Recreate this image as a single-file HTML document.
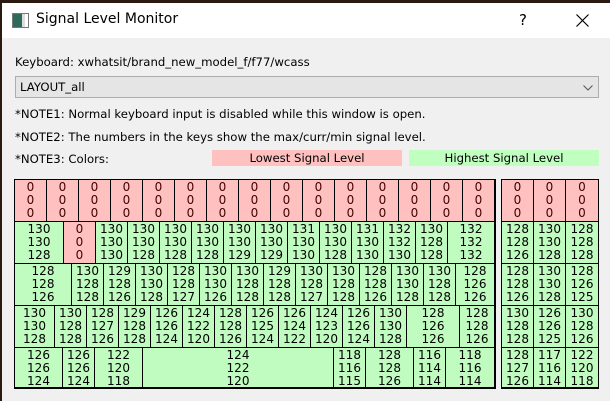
<!DOCTYPE html>
<html><head><meta charset="utf-8"><style>
*{margin:0;padding:0;box-sizing:border-box}
body{width:610px;height:401px;overflow:hidden;background:#2a1a10;font-family:Tahoma,"DejaVu Sans","Liberation Sans",sans-serif;position:relative}
.win{position:absolute;left:2px;top:3px;width:608px;height:398px;background:#f0f0f0}
.title{position:absolute;left:0;top:0;width:608px;height:35px;background:#fff}
.t{position:absolute;font-size:11.7px;color:#000;white-space:nowrap}
.row{position:absolute;display:flex;height:42px}
.c{background:#c0fcc0;border-right:1px solid #000;font-size:12px;line-height:13px;text-align:center;padding-top:1px;color:#000;flex:none}
.p{background:#ffc0c0;color:#400}
.blk{position:absolute;border:1px solid #000;background:#000}
.row .c{border-bottom:1px solid #000}
</style></head><body>
<div class="win">
 <div class="title">
  <div style="position:absolute;left:10px;top:10px;width:17px;height:15px;border:1px solid #777;background:linear-gradient(90deg,#2d6a5a 0 60%,#ddd 60% 80%,#fff 80%)"></div>
  <div style="position:absolute;left:34px;top:8px;font-size:14px;font-family:'DejaVu Sans',sans-serif;color:#000">Signal Level Monitor</div>
  <div style="position:absolute;left:517px;top:8px;font-size:15px;font-family:'DejaVu Sans',sans-serif">?</div>
  <svg style="position:absolute;left:574px;top:11px" width="13" height="13"><path d="M0.5 0.5L12.5 12.5M12.5 0.5L0.5 12.5" stroke="#000" stroke-width="1.2"/></svg>
 </div>
 <div class="t" style="left:13px;top:52px">Keyboard: xwhatsit/brand_new_model_f/f77/wcass</div>
 <div style="position:absolute;left:13px;top:73px;width:584px;height:22px;background:#e5e5e5;border:1px solid #adadad"></div>
 <div class="t" style="left:18px;top:77px">LAYOUT_all</div>
 <svg style="position:absolute;left:581px;top:82px" width="10" height="6"><path d="M0.5 0.5L5 5L9.5 0.5" fill="none" stroke="#555"/></svg>
 <div class="t" style="left:13px;top:104px">*NOTE1: Normal keyboard input is disabled while this window is open.</div>
 <div class="t" style="left:13px;top:127px">*NOTE2: The numbers in the keys show the max/curr/min signal level.</div>
 <div class="t" style="left:13px;top:149px">*NOTE3: Colors:</div>
 <div class="t" style="left:210px;top:147px;width:190px;height:16px;background:#ffc0c0;text-align:center;line-height:16px">Lowest Signal Level</div>
 <div class="t" style="left:407px;top:147px;width:190px;height:16px;background:#c0ffc0;text-align:center;line-height:16px">Highest Signal Level</div>
</div>

<div class="blk" style="left:14px;top:179px;width:482px;height:210px"></div>
<div class="blk" style="left:501px;top:179px;width:98px;height:210px"></div>

<div class="row" style="left:15px;top:180px">
<div class="c p" style="width:32px">0<br>0<br>0</div><div class="c p" style="width:32px">0<br>0<br>0</div><div class="c p" style="width:32px">0<br>0<br>0</div><div class="c p" style="width:32px">0<br>0<br>0</div><div class="c p" style="width:32px">0<br>0<br>0</div><div class="c p" style="width:32px">0<br>0<br>0</div><div class="c p" style="width:32px">0<br>0<br>0</div><div class="c p" style="width:32px">0<br>0<br>0</div><div class="c p" style="width:32px">0<br>0<br>0</div><div class="c p" style="width:32px">0<br>0<br>0</div><div class="c p" style="width:32px">0<br>0<br>0</div><div class="c p" style="width:32px">0<br>0<br>0</div><div class="c p" style="width:32px">0<br>0<br>0</div><div class="c p" style="width:32px">0<br>0<br>0</div><div class="c p" style="width:32px">0<br>0<br>0</div>
</div>
<div class="row" style="left:15px;top:222px">
<div class="c" style="width:49px">130<br>130<br>128</div><div class="c p" style="width:32px">0<br>0<br>0</div><div class="c" style="width:32px">130<br>130<br>130</div><div class="c" style="width:32px">130<br>130<br>128</div><div class="c" style="width:32px">130<br>130<br>128</div><div class="c" style="width:32px">130<br>130<br>128</div><div class="c" style="width:32px">130<br>130<br>129</div><div class="c" style="width:32px">130<br>130<br>129</div><div class="c" style="width:32px">131<br>130<br>130</div><div class="c" style="width:32px">130<br>130<br>128</div><div class="c" style="width:32px">131<br>130<br>130</div><div class="c" style="width:32px">132<br>132<br>130</div><div class="c" style="width:32px">130<br>128<br>128</div><div class="c" style="width:47px">132<br>132<br>132</div>
</div>
<div class="row" style="left:15px;top:264px">
<div class="c" style="width:57px">128<br>128<br>126</div><div class="c" style="width:32px">130<br>128<br>128</div><div class="c" style="width:32px">129<br>128<br>126</div><div class="c" style="width:32px">130<br>130<br>128</div><div class="c" style="width:32px">128<br>128<br>127</div><div class="c" style="width:32px">130<br>130<br>126</div><div class="c" style="width:32px">130<br>128<br>128</div><div class="c" style="width:32px">129<br>128<br>128</div><div class="c" style="width:32px">130<br>128<br>127</div><div class="c" style="width:32px">130<br>128<br>128</div><div class="c" style="width:32px">128<br>128<br>126</div><div class="c" style="width:32px">130<br>130<br>128</div><div class="c" style="width:32px">130<br>128<br>128</div><div class="c" style="width:39px">128<br>126<br>126</div>
</div>
<div class="row" style="left:15px;top:306px">
<div class="c" style="width:40px">130<br>130<br>128</div><div class="c" style="width:32px">130<br>128<br>128</div><div class="c" style="width:32px">128<br>127<br>126</div><div class="c" style="width:32px">129<br>128<br>128</div><div class="c" style="width:32px">126<br>126<br>124</div><div class="c" style="width:32px">124<br>122<br>120</div><div class="c" style="width:32px">128<br>128<br>126</div><div class="c" style="width:32px">126<br>125<br>124</div><div class="c" style="width:32px">126<br>124<br>122</div><div class="c" style="width:32px">124<br>123<br>120</div><div class="c" style="width:32px">126<br>126<br>124</div><div class="c" style="width:32px">130<br>130<br>128</div><div class="c" style="width:53px">128<br>126<br>126</div><div class="c" style="width:35px">128<br>128<br>126</div>
</div>
<div class="row" style="left:15px;top:348px;height:40px">
<div class="c" style="width:48px">126<br>126<br>124</div><div class="c" style="width:32px">126<br>126<br>124</div><div class="c" style="width:48px">122<br>120<br>118</div><div class="c" style="width:191px">124<br>122<br>120</div><div class="c" style="width:32px">118<br>116<br>115</div><div class="c" style="width:48px">128<br>128<br>126</div><div class="c" style="width:32px">116<br>114<br>114</div><div class="c" style="width:49px">118<br>116<br>114</div>
</div>

<div class="row" style="left:502px;top:180px">
<div class="c p" style="width:32px">0<br>0<br>0</div><div class="c p" style="width:32px">0<br>0<br>0</div><div class="c p" style="width:32px;border-right:none">0<br>0<br>0</div></div>
<div class="row" style="left:502px;top:222px">
<div class="c" style="width:32px">128<br>128<br>126</div><div class="c" style="width:32px">130<br>130<br>128</div><div class="c" style="width:32px;border-right:none">128<br>128<br>128</div></div>
<div class="row" style="left:502px;top:264px">
<div class="c" style="width:32px">128<br>128<br>126</div><div class="c" style="width:32px">130<br>130<br>128</div><div class="c" style="width:32px;border-right:none">128<br>126<br>125</div></div>
<div class="row" style="left:502px;top:306px">
<div class="c" style="width:32px">130<br>128<br>128</div><div class="c" style="width:32px">126<br>126<br>125</div><div class="c" style="width:32px;border-right:none">130<br>128<br>126</div></div>
<div class="row" style="left:502px;top:348px;height:40px">
<div class="c" style="width:32px">128<br>127<br>126</div><div class="c" style="width:32px">117<br>116<br>114</div><div class="c" style="width:32px;border-right:none">122<br>120<br>118</div></div>
</body></html>
